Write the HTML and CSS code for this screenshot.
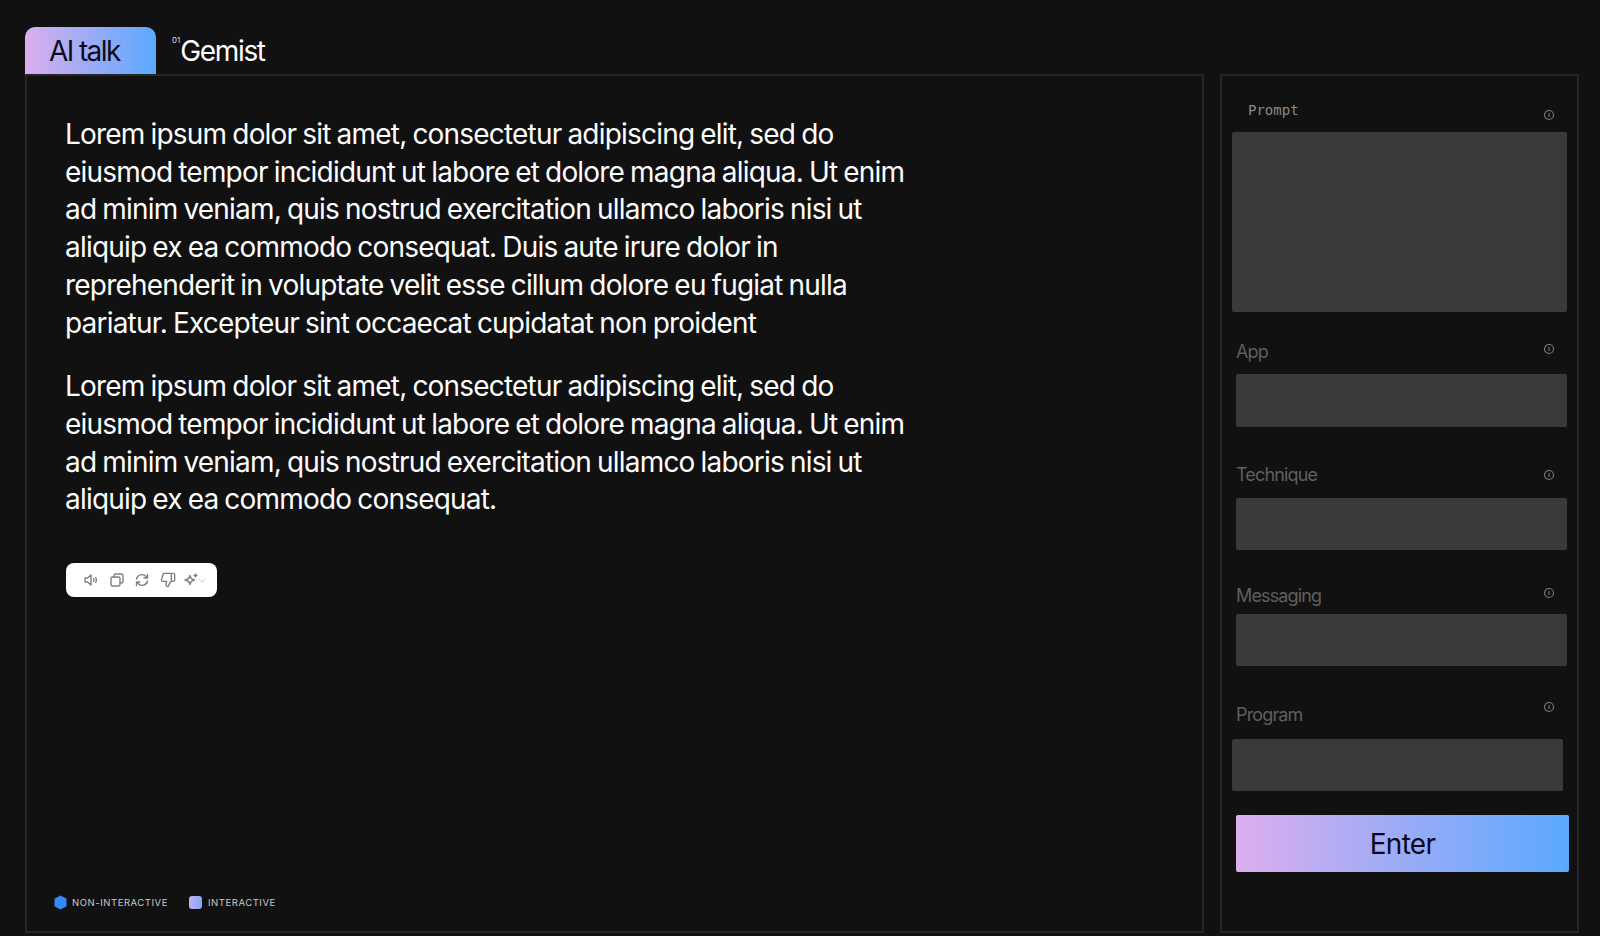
FILE: index.html
```html
<!DOCTYPE html>
<html lang="en">
<head>
    <meta charset="UTF-8">
    <meta name="viewport" content="width=device-width, initial-scale=1.0">
    <title>AI talk</title>
    <link rel="stylesheet" href="styles.css">
</head>
<body>
    <div class="tabs">
        <div class="tab tab-active">AI talk</div>
        <div class="tab"><sup class="tab-num">01</sup>Gemist</div>
    </div>

    <div class="panels">
        <main class="chat">
            <p class="answer">Lorem ipsum dolor sit amet, consectetur adipiscing elit, sed do eiusmod tempor incididunt ut labore et dolore magna aliqua. Ut enim ad minim veniam, quis nostrud exercitation ullamco laboris nisi ut aliquip ex ea commodo consequat. Duis aute irure dolor in reprehenderit in voluptate velit esse cillum dolore eu fugiat nulla pariatur. Excepteur sint occaecat cupidatat non proident</p>
            <p class="answer">Lorem ipsum dolor sit amet, consectetur adipiscing elit, sed do eiusmod tempor incididunt ut labore et dolore magna aliqua. Ut enim ad minim veniam, quis nostrud exercitation ullamco laboris nisi ut aliquip ex ea commodo consequat.</p>

            <div class="toolbar">
                <svg class="tool" viewBox="0 0 16 16"><path d="M2 6h2.500L8 3v10l-3.500-3H2z"/><path d="M10.500 6.500q.8 1.500 0 3M12.800 5.500q1.200 2.500 0 5"/></svg>
                <svg class="tool" viewBox="0 0 16 16"><rect x="2" y="5" width="9" height="9" rx="1.500"/><path d="M5 5V3.500A1.500 1.500 0 0 1 6.500 2h6A1.500 1.500 0 0 1 14 3.500v6a1.500 1.500 0 0 1-1.500 1.500H11"/></svg>
                <svg class="tool" viewBox="0 0 16 16"><path d="M2.500 7a5.500 5.500 0 0 1 9.500-2.500L13.500 6M13.500 2.500V6H10M13.500 9A5.500 5.500 0 0 1 4 11.500L2.500 10M2.500 13.500V10H6"/></svg>
                <svg class="tool tool-thumb" viewBox="0 0 24 24"><path d="M17 14V2M9 18.120 10 14H4.170a2 2 0 0 1-1.920-2.560l2.330-8A2 2 0 0 1 6.500 2H20a2 2 0 0 1 2 2v8a2 2 0 0 1-2 2h-2.760a2 2 0 0 0-1.790 1.110L12 22a3.130 3.130 0 0 1-3-3.880Z"/></svg>
                <svg class="tool tool-spark" viewBox="0 0 16 16"><path d="M7 3.500q.8 4 4.500 4.500-3.700.5-4.500 4.500Q6.200 8.500 2 8q4.200-.5 5-4.500z"/><path d="M12.500 2v3M11 3.500h3"/></svg>
                <svg class="tool-arrow" viewBox="0 0 10 6"><path d="M1 1l4 4 4-4"/></svg>
            </div>

            <div class="legend">
                <svg class="legend-icon" viewBox="0 0 14 16"><path class="cube" d="M7 .5l6.500 3.500v8L7 15.500.5 12V4z"/></svg>
                <span class="legend-text">Non-interactive</span>
                <span class="legend-square"></span>
                <span class="legend-text">Interactive</span>
            </div>
        </main>

        <aside class="side">
            <div class="field field-prompt">
                <div class="field-head">
                    <label class="field-label">Prompt</label>
                    <svg class="info" viewBox="0 0 12 12"><circle cx="6" cy="6" r="4.500"/><path d="M6 4v4"/></svg>
                </div>
                <div class="box box-large"></div>
            </div>
            <div class="field field-app">
                <div class="field-head">
                    <label class="field-label">App</label>
                    <svg class="info" viewBox="0 0 12 12"><circle cx="6" cy="6" r="4.500"/><path d="M6 4v4"/></svg>
                </div>
                <div class="box"></div>
            </div>
            <div class="field field-technique">
                <div class="field-head">
                    <label class="field-label">Technique</label>
                    <svg class="info" viewBox="0 0 12 12"><circle cx="6" cy="6" r="4.500"/><path d="M6 4v4"/></svg>
                </div>
                <div class="box"></div>
            </div>
            <div class="field field-messaging">
                <div class="field-head">
                    <label class="field-label">Messaging</label>
                    <svg class="info" viewBox="0 0 12 12"><circle cx="6" cy="6" r="4.500"/><path d="M6 4v4"/></svg>
                </div>
                <div class="box"></div>
            </div>
            <div class="field field-program">
                <div class="field-head">
                    <label class="field-label">Program</label>
                    <svg class="info" viewBox="0 0 12 12"><circle cx="6" cy="6" r="4.500"/><path d="M6 4v4"/></svg>
                </div>
                <div class="box"></div>
            </div>
            <button class="enter">Enter</button>
        </aside>
    </div>
</body>
</html>
```

FILE: styles.css
```css
* { box-sizing: border-box; }
html, body { height: 100%; }
body { margin: 0; padding: 27px 21px 3px 25px; display: flex; flex-direction: column; background: #111112; color: #fff; font-family: Inter, "Liberation Sans", sans-serif; overflow: hidden; }

.tabs { display: flex; height: 47px; }
.tab { display: flex; align-items: center; padding-top: 1px; font-size: 28px; letter-spacing: -1.35px; }
.tab-active { width: 131px; padding-left: 24px; border-radius: 10px 10px 0 0; letter-spacing: -1.6px; color: #0d0d20; background: linear-gradient(90deg, #dcaeee 0%, #5aa9ff 100%); }
.tab-num { align-self: flex-start; margin: 8px 0 0 16px; font-size: 8px; line-height: 8px; letter-spacing: 0; color: #ddd; }

.panels { flex: 1; display: flex; gap: 16px; min-height: 0; }

.chat { flex: 0 0 1179px; display: flex; flex-direction: column; padding: 40px 0 21px 38px; border: 2px solid #262626; }
.answer { width: 860px; margin: 0 0 26px; font-size: 28px; line-height: 37.7px; letter-spacing: -0.8px; word-spacing: -1.1px; color: #fdfdfd; }

.toolbar { display: flex; align-items: center; align-self: flex-start; width: 151px; height: 34px; margin: 18px 0 0 1px; padding-left: 17px; gap: 9.500px; background: #fff; border-radius: 8px; }
.tool { width: 16px; height: 16px; fill: none; stroke: #808080; stroke-width: 1.400; stroke-linejoin: round; stroke-linecap: round; }
.tool-thumb { stroke-width: 2.100; }
.tool-spark { margin: 0 -11px 0 -2px; }
.tool-arrow { width: 8px; height: 5px; fill: none; stroke: #c4c4c4; stroke-width: 1.200; }

.legend { display: flex; align-items: center; margin: auto 0 0 -11px; height: 16px; font-size: 9.500px; }
.legend-icon { width: 13px; height: 15px; margin-right: 5px; }
.cube { fill: #2f8bf8; }
.legend-text { text-transform: uppercase; letter-spacing: 0.55px; color: #c9c9c9; }
.legend-square { width: 13px; height: 13px; margin: 0 6px 0 21px; border-radius: 3px; background: linear-gradient(90deg, #c7aef0, #7ea9fb); }

.side { flex: 1; min-width: 0; padding: 16px 10px 0 14px; border: 2px solid #262626; }

.field-head { display: flex; justify-content: space-between; align-items: flex-start; height: 40px; padding-right: 12px; }
.field-label { height: 20px; font-size: 18px; line-height: 20px; letter-spacing: -0.85px; color: #5f5f5f; }
.info { width: 12px; height: 12px; fill: none; stroke: #7b7b7b; stroke-width: 1.100; }
.box { height: 52px; background: #3a3a3a; border-radius: 2px; }
.box-large { height: 180px; margin-left: -4px; }

.field-prompt .field-label { margin: 8px 0 0 12px; font-family: "DejaVu Sans Mono", monospace; font-size: 14px; letter-spacing: 0; color: #8a8a8a; }
.field-prompt .info { margin-top: 17px; }
.field-app { margin-top: 22px; }
.field-app .field-label { margin-top: 8px; }
.field-app .info { margin-top: 9px; }
.field-app .box { height: 53px; }
.field-technique { margin-top: 31px; }
.field-technique .field-label { margin-top: 7px; }
.field-technique .info { margin-top: 11px; }
.field-messaging { margin-top: 24px; }
.field-messaging .field-label { margin-top: 12px; }
.field-messaging .info { margin-top: 13px; }
.field-program { margin-top: 33px; }
.field-program .field-label { margin-top: 6px; }
.field-program .info { margin-top: 2px; }
.field-program .box { margin: 0 4px 0 -4px; }

.enter { display: block; width: 333px; height: 57px; margin-top: 24px; padding: 0; border: 0; border-radius: 2px; font-family: inherit; font-size: 28px; letter-spacing: -0.7px; color: #0a0a1c; background: linear-gradient(90deg, #dcaeee 0%, #5aa9ff 100%); }
```
